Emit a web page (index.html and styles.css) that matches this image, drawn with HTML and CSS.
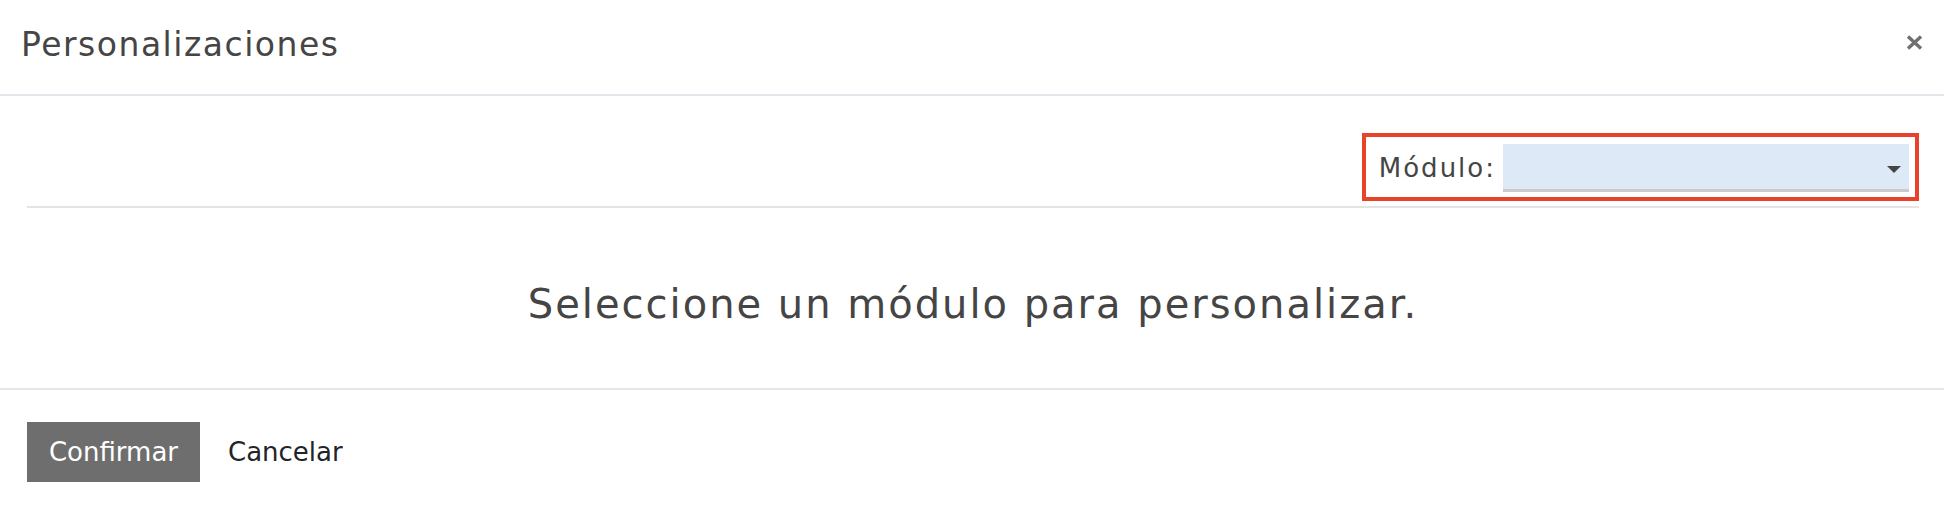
FILE: index.html
```html
<!DOCTYPE html>
<html>
  <head>
    <title>Personalizaciones</title>
    <link rel="stylesheet" href="styles.css">
  </head>
  <body>
    <div class="modal">
      <div class="modal-header">
        <div class="modal-title">Personalizaciones</div>
        <button class="modal-close" title="Cerrar">
          <svg width="17" height="15" viewBox="0 0 17 15">
            <path d="M2 1.5 L15 13.5 M15 1.5 L2 13.5" stroke="#707070" stroke-width="3.4" fill="none"/>
          </svg>
        </button>
      </div>

      <div class="modal-body">
        <div class="module-toolbar">
          <div class="module-picker">
            <label class="module-label">Módulo:</label>
            <div class="module-select" role="combobox">
              <span class="module-caret"></span>
            </div>
          </div>
        </div>
        <div class="module-empty">Seleccione un módulo para personalizar.</div>
      </div>

      <div class="modal-footer">
        <button class="modal-btn primary">Confirmar</button>
        <button class="modal-btn link">Cancelar</button>
      </div>
    </div>
  </body>
</html>
```

FILE: styles.css
```css
/* Personalizaciones modal */
body {
  margin: 0;
  background: #ffffff;
  font-family: "DejaVu Sans", "Liberation Sans", sans-serif;
  color: #454545;
}

.modal {
  width: 1944px;
  height: 518px;
  background: #ffffff;
}

.modal-header {
  display: flex;
  align-items: center;
  justify-content: space-between;
  height: 90px;
  padding: 0 21px 4px 21px;
  border-bottom: 2px solid #e3e6ea;
}

.modal-title {
  font-size: 33px;
  line-height: 40px;
  letter-spacing: 1.5px;
  color: #454545;
}

.modal-close {
  background: none;
  border: none;
  padding: 0;
  margin-top: -5px;
  cursor: pointer;
  display: flex;
}

.modal-body {
  padding: 37px 25px 0 27px;
  border-bottom: 2px solid #e3e6ea;
}

.module-toolbar {
  display: flex;
  justify-content: flex-end;
  padding-bottom: 5px;
  border-bottom: 2px solid #e4e4e4;
}

.module-picker {
  display: flex;
  align-items: center;
  gap: 7px;
  border: 4px solid #e8412c;
  padding: 7px 6px 5px 13px;
}

.module-label {
  font-size: 26px;
  line-height: 30px;
  letter-spacing: 2px;
  color: #454545;
}

.module-select {
  width: 398px;
  height: 39px;
  padding: 6px 8px 0 0;
  background: #dde9f6;
  border-bottom: 3px solid #cbcbcb;
  display: flex;
  align-items: center;
  justify-content: flex-end;
}

.module-caret {
  width: 0;
  height: 0;
  border-left: 7px solid transparent;
  border-right: 7px solid transparent;
  border-top: 7px solid #444444;
}

.module-empty {
  margin-top: 71px;
  padding-bottom: 58px;
  text-align: center;
  font-size: 40px;
  line-height: 51px;
  letter-spacing: 2px;
  color: #454545;
}

.modal-footer {
  display: flex;
  align-items: center;
  gap: 28px;
  padding: 32px 27px;
}

.modal-btn {
  font-family: "DejaVu Sans", "Liberation Sans", sans-serif;
  font-size: 26px;
  height: 60px;
  border: none;
  cursor: pointer;
}

.modal-btn.primary {
  width: 173px;
  background: #6e6e6e;
  color: #ffffff;
  padding: 0;
}

.modal-btn.link {
  background: none;
  color: #212529;
  padding: 0;
}
```
